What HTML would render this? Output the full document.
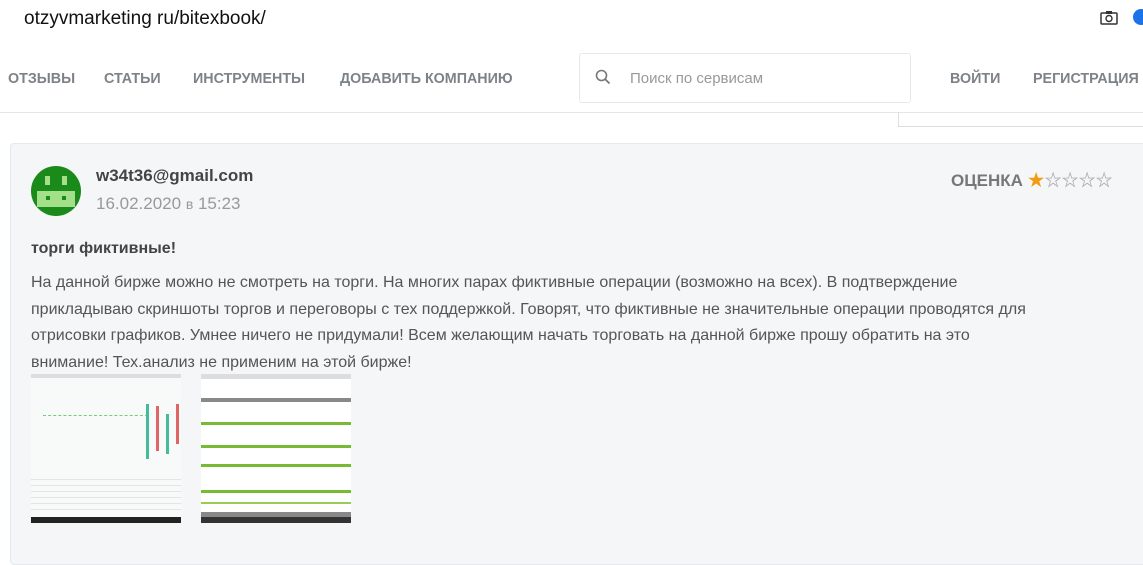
<!DOCTYPE html>
<html><head><meta charset="utf-8"><style>
body{margin:0;width:1143px;height:559px;overflow:hidden;background:#fff;font-family:"Liberation Sans","Noto Sans CJK SC",sans-serif;position:relative}
.a{position:absolute;white-space:nowrap}
.nav{font-weight:bold;font-size:14.3px;color:#7d8288;top:71px}
.card{position:absolute;left:10px;top:143px;width:1140px;height:420px;background:#f4f6f8;border:1px solid #e6e9ec;border-radius:4px}
.t{font-size:16px;color:#555;line-height:26.5px}
.st{color:#aaa;font-size:17px}
</style></head><body>
<div class="a" style="left:24px;top:8px;font-size:19px;color:#111">otzyvmarketing ru/bitexbook/</div>
<svg class="a" style="left:1100px;top:10px" width="18" height="16" viewBox="0 0 18 16"><rect x="1" y="3" width="16" height="11" rx="1" fill="none" stroke="#333" stroke-width="1.5"/><rect x="6" y="1" width="6" height="3" fill="#333"/><circle cx="9" cy="8.5" r="3" fill="none" stroke="#333" stroke-width="1.4"/></svg>
<div class="a" style="left:1133px;top:9px;width:16px;height:16px;border-radius:50%;background:#1a73e8"></div>
<div class="a nav" style="left:8px">ОТЗЫВЫ</div>
<div class="a nav" style="left:104px">СТАТЬИ</div>
<div class="a nav" style="left:193px">ИНСТРУМЕНТЫ</div>
<div class="a nav" style="left:340px">ДОБАВИТЬ КОМПАНИЮ</div>
<div class="a" style="left:579px;top:53px;width:330px;height:48px;border:1px solid #e6e8ea;border-radius:3px"></div>
<svg class="a" style="left:595px;top:69px" width="16" height="16" viewBox="0 0 16 16"><circle cx="6.5" cy="6.5" r="5" fill="none" stroke="#777" stroke-width="1.6"/><path d="M10 10l4.5 4.5" stroke="#777" stroke-width="1.8"/></svg>
<div class="a" style="left:630px;top:70px;font-size:15px;color:#999">Поиск по сервисам</div>
<div class="a nav" style="left:950px">ВОЙТИ</div>
<div class="a nav" style="left:1033px">РЕГИСТРАЦИЯ</div>
<div class="a" style="left:0;top:112px;width:1143px;height:1px;background:#e4e6e8"></div>
<div class="a" style="left:898px;top:112px;width:250px;height:14px;border:1px solid #dcdfe2;border-top:none"></div>
<div class="card"></div>
<svg class="a" style="left:31px;top:166px" width="50" height="50" viewBox="0 0 50 50"><circle cx="25" cy="25" r="25" fill="#1a8a1a"/><rect x="6" y="25" width="38" height="16" fill="#a4e08a"/><rect x="14" y="10" width="5" height="9" fill="#a4e08a"/><rect x="31" y="10" width="5" height="9" fill="#a4e08a"/><rect x="15" y="30" width="4" height="4" fill="#1a8a1a"/><rect x="31" y="30" width="4" height="4" fill="#1a8a1a"/></svg>
<div class="a" style="left:96px;top:166px;font-size:17px;font-weight:bold;color:#444">w34t36@gmail.com</div>
<div class="a" style="left:96px;top:194px;font-size:17px;color:#999">16.02.2020 <span style="font-size:14px">в</span> 15:23</div>
<div class="a" style="left:951px;top:166px;font-size:17px;font-weight:bold;color:#777">ОЦЕНКА <span style="color:#f29c11;font-size:17px">★</span><span class="st">☆☆☆☆</span></div>
<div class="a" style="left:31px;top:240px;font-size:16px;font-weight:bold;color:#444">торги фиктивные!</div>
<div class="a t" style="left:31px;top:270px;white-space:normal;width:1015px">На данной бирже можно не смотреть на торги. На многих парах фиктивные операции (возможно на всех). В подтверждение прикладываю скриншоты торгов и переговоры с тех поддержкой. Говорят, что фиктивные не значительные операции проводятся для отрисовки графиков. Умнее ничего не придумали! Всем желающим начать торговать на данной бирже прошу обратить на это внимание! Тех.анализ не применим на этой бирже!</div>
<div class="a" style="left:31px;top:374px;width:150px;height:149px;background:#f8f9f9;border-bottom:6px solid #222;box-sizing:border-box">
<div style="position:absolute;left:0;top:0;width:150px;height:4px;background:#ddd"></div>
<div style="position:absolute;left:12px;top:41px;width:105px;border-top:1px dashed #7c7"></div>
<div style="position:absolute;left:115px;top:30px;width:3px;height:55px;background:#4b9"></div>
<div style="position:absolute;left:125px;top:32px;width:3px;height:45px;background:#d66"></div>
<div style="position:absolute;left:135px;top:40px;width:3px;height:40px;background:#4b9"></div>
<div style="position:absolute;left:145px;top:30px;width:3px;height:40px;background:#d66"></div>
<div style="position:absolute;left:0;top:100px;width:150px;height:40px;background:repeating-linear-gradient(#f8f9f9 0 5px,#e2e4e6 5px 6px)"></div>
</div>
<div class="a" style="left:201px;top:374px;width:150px;height:149px;background:#fff;border-bottom:6px solid #333;box-sizing:border-box">
<div style="position:absolute;left:0;top:0;width:150px;height:5px;background:#ddd"></div>
<div style="position:absolute;left:0;top:24px;width:150px;height:4px;background:#888"></div>
<div style="position:absolute;left:0;top:48px;width:150px;height:3px;background:#7b3"></div>
<div style="position:absolute;left:0;top:71px;width:150px;height:3px;background:#7b3"></div>
<div style="position:absolute;left:0;top:90px;width:150px;height:3px;background:#7b3"></div>
<div style="position:absolute;left:0;top:116px;width:150px;height:3px;background:#7b3"></div>
<div style="position:absolute;left:0;top:128px;width:150px;height:2px;background:#9c5"></div>
<div style="position:absolute;left:0;top:138px;width:150px;height:5px;background:#888"></div>
</div>
</body></html>
